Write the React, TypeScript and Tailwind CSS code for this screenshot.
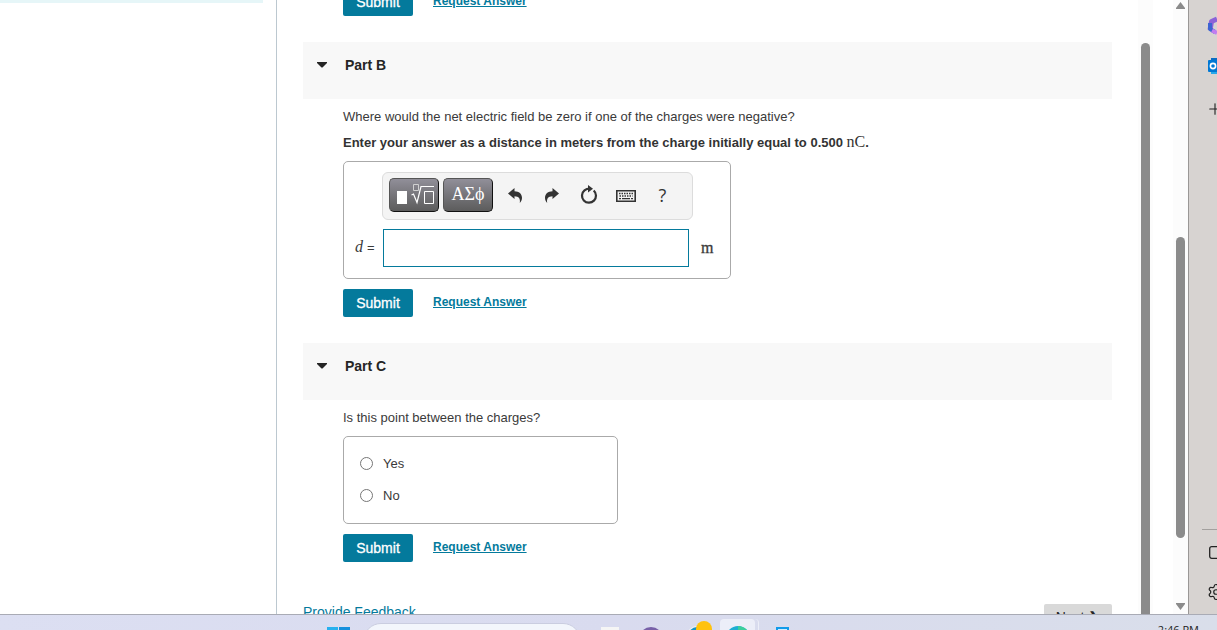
import React from "react";
import { Plus, Settings } from "lucide-react";

function SubmitRow() {
  return (
    <div className="flex items-start">
      <button
        type="button"
        className="h-7 w-[70px] rounded-xs bg-[#047a9c] text-sm font-normal text-white [-webkit-text-stroke:0.3px_white]"
      >
        Submit
      </button>
      <a
        href="#answer"
        className="ml-5 pt-[5px] text-xs font-bold text-[#047a9c] underline"
      >
        Request Answer
      </a>
    </div>
  );
}

function PartHeader({ title }: { title: string }) {
  return (
    <h2 className="mt-[26px] h-[57px] bg-[#f8f8f8]">
      <button
        type="button"
        className="flex items-center pt-3 pl-3.5 text-sm font-bold text-[#252525]"
      >
        <svg width="10" height="6" viewBox="0 0 10 6" aria-hidden="true">
          <path d="M0 0h10v1L5.500 5.600h-1L0 1z" fill="#252525" />
        </svg>
        <span className="ml-[18px] leading-[22px]">{title}</span>
      </button>
    </h2>
  );
}

function MathToolbar() {
  const darkButton =
    "flex h-[34px] w-[50px] items-center justify-center rounded-[5px] border border-[#111] border-t-[#555] border-l-[#555] bg-linear-to-b from-[#918f99] to-[#5c5c5c] text-white";
  const iconButton =
    "flex h-[34px] w-[37px] items-center justify-center text-[#333]";

  return (
    <div className="ml-[38px] flex h-12 w-[311px] items-start rounded-md border border-[#dcdcdc] bg-[#f4f4f4] pt-[5px] pl-1.5">
      <button type="button" aria-label="Templates" className={darkButton}>
        <svg width="40" height="24" viewBox="0 0 40 24" fill="none" stroke="#fff">
          <path d="M3 8h10v13H3z" fill="#fff" stroke="none" />
          <path d="M19.500 1.500h5v6h-5z" stroke="#d0d0d0" />
          <path d="M17.500 12l2-1 3.500 8.500L27 3.500h13" strokeWidth="1.200" />
          <path d="M30.500 8.500h9v12h-9z" />
        </svg>
      </button>
      <button
        type="button"
        aria-label="Symbols"
        className={`${darkButton} ml-1 pb-0.5 font-['Liberation_Serif',serif] text-lg`}
      >
        ΑΣϕ
      </button>
      <button type="button" aria-label="Undo" className={`${iconButton} ml-[3px]`}>
        <svg width="14" height="15" viewBox="0 0 14 15" fill="currentColor">
          <path d="M0 5.500L6.500 0v3.200c4.500.1 7.500 2.600 7.500 6.600 0 2-.7 3.600-2.200 5.200.7-4.300-.8-6.700-5.300-6.800V11z" />
        </svg>
      </button>
      <button type="button" aria-label="Redo" className={iconButton}>
        <svg width="14" height="15" viewBox="0 0 14 15" fill="currentColor">
          <path d="M14 5.500L7.500 0v3.200C3 3.300 0 5.800 0 9.800c0 2 .7 3.600 2.200 5.200-.7-4.300.8-6.700 5.300-6.800V11z" />
        </svg>
      </button>
      <button type="button" aria-label="Reset" className={iconButton}>
        <svg width="18" height="20" viewBox="0 0 18 20" fill="none">
          <path
            d="M13.700 5.500A7 7 0 1 1 4.500 5.300Q6.500 3.700 10 3.700"
            stroke="currentColor"
            strokeWidth="2.200"
          />
          <path d="M8 0l5 3.800L8 7.500z" fill="currentColor" />
        </svg>
      </button>
      <button type="button" aria-label="Keyboard" className={`${iconButton} pt-0.5`}>
        <svg width="20" height="16" viewBox="0 0 20 16" fill="none" stroke="currentColor">
          <path d="M.8 2.800h18.400v10.400H.8z" strokeWidth="1.600" />
          <path d="M3 5.500h14" strokeWidth="1.300" strokeDasharray="1.500 1" />
          <path d="M3.500 8h13" strokeWidth="1.300" strokeDasharray="1.500 1" />
          <path d="M3 10.700h2M6 10.700h8M15 10.700h2" strokeWidth="1.300" />
        </svg>
      </button>
      <button
        type="button"
        aria-label="Help"
        className={`${iconButton} font-['Open_Sans',sans-serif] text-lg`}
      >
        ?
      </button>
    </div>
  );
}

function Choice({ label }: { label: string }) {
  return (
    <label className="flex h-8 items-center">
      <input
        type="radio"
        name="between"
        className="size-[13px] appearance-none rounded-full border border-[#767676] bg-white checked:border-4 checked:border-[#047a9c]"
      />
      <span className="ml-2.5 pt-0.5">{label}</span>
    </label>
  );
}

function Assignment() {
  return (
    <main className="min-w-0 flex-1 overflow-hidden pr-[26px] pl-[26px] text-[13px] text-[#3a3a3a]">
      <div className="-mt-3 pl-10">
        <SubmitRow />
      </div>

      <PartHeader title="Part B" />
      <section className="pl-10">
        <p className="pt-2 leading-5">
          Where would the net electric field be zero if one of the charges were
          negative?
        </p>
        <p className="mt-[5px] leading-5 font-bold text-[#333]">
          Enter your answer as a distance in meters from the charge initially
          equal to 0.500{" "}
          <span className="font-['Liberation_Serif',serif] text-base leading-5 font-normal">
            nC
          </span>
          .
        </p>
        <div className="mt-2 h-[118px] w-[388px] rounded-[5px] border border-[#aaa] pt-2.5">
          <MathToolbar />
          <div className="mt-[9px] flex items-center font-['Liberation_Serif',serif]">
            <label htmlFor="distance" className="w-[39px] pb-0.5 pl-[11px] text-base whitespace-nowrap">
              <i>d</i> <span className="font-['Liberation_Sans',sans-serif] text-[13px]">=</span>
            </label>
            <input
              id="distance"
              type="text"
              className="h-[38px] w-[306px] border border-[#047a9c] px-2 text-base outline-none"
            />
            <span className="ml-3 text-base [-webkit-text-stroke:0.3px_#3a3a3a]">m</span>
          </div>
        </div>
        <div className="mt-2.5">
          <SubmitRow />
        </div>
      </section>

      <PartHeader title="Part C" />
      <section className="pl-10">
        <p className="pt-2 leading-5">Is this point between the charges?</p>
        <fieldset className="mt-2 h-[88px] w-[275px] rounded-[5px] border border-[#aaa] pt-2.5 pl-4">
          <Choice label="Yes" />
          <Choice label="No" />
        </fieldset>
        <div className="mt-2.5">
          <SubmitRow />
        </div>
      </section>

      <footer className="mt-[42px] flex items-start justify-between">
        <a href="#feedback" className="text-sm leading-4 text-[#047a9c]">
          Provide Feedback
        </a>
        <button
          type="button"
          className="h-[26px] w-[68px] rounded-xs bg-[#d9d9d9] text-sm text-[#252525]"
        >
          Next ❯
        </button>
      </footer>
    </main>
  );
}

function BrowserSidebar() {
  return (
    <aside className="flex w-[29px] shrink-0 flex-col overflow-hidden border-l border-[#9a9796] bg-[#d7d3d1] text-[#222]">
      <svg className="mt-4 ml-[18px] shrink-0" width="20" height="20" viewBox="0 0 20 20" fill="none">
        <path d="M10 3L4.500 5.500 3 14" stroke="#8b62d8" strokeWidth="5" strokeLinejoin="round" />
        <path d="M3 7v6l5 3" stroke="#3d63d2" strokeWidth="4" strokeLinejoin="round" />
        <path d="M5 14.500l5 2.500" stroke="#c27cf0" strokeWidth="4" />
      </svg>
      <svg className="mt-[21px] ml-[18px] shrink-0" width="20" height="18" viewBox="0 0 20 18" fill="none">
        <path d="M4 1h16v16H4z" fill="#28a8ea" />
        <path d="M4 1h16v4H4z" fill="#0a6cc4" />
        <rect x="1" y="3" width="12" height="12" rx="1" fill="#0078d4" />
        <circle cx="6" cy="9" r="2.600" stroke="#fff" strokeWidth="1.600" />
      </svg>
      <Plus className="mt-[25px] ml-[17px] shrink-0" size={18} strokeWidth={1.5} />
      <div className="mt-auto ml-[13px] border-t border-[#a3a09e] pb-4" />
      <svg className="ml-5 shrink-0" width="16" height="13" viewBox="0 0 16 13" fill="none">
        <rect x=".7" y=".7" width="15" height="11.600" rx="2" stroke="#222" strokeWidth="1.300" />
      </svg>
      <Settings className="mt-6 mb-[13px] ml-[18px] shrink-0" size={18} strokeWidth={1.6} />
    </aside>
  );
}

function Taskbar() {
  return (
    <footer className="flex h-4 shrink-0 items-start overflow-hidden border-t border-[#a9abb5] bg-linear-to-r from-[#dcdff2] via-[#d9dbef] to-[#d9deea]">
      <svg className="mt-3 ml-[327px] shrink-0" width="24" height="24" viewBox="0 0 24 24">
        <path d="M0 0h11v11H0zM0 12h11v11H0z" fill="#28b1ef" />
        <path d="M12 0h11v11H12zM12 12h11v11H12z" fill="#1690dd" />
      </svg>
      <div className="mt-2 ml-3 h-9 w-[218px] shrink-0 rounded-full border border-[#cacde0] bg-[#f3f6fc]" />
      <div className="mt-3 ml-5 h-6 w-[18px] shrink-0 bg-[#f5f5f5]" />
      <div className="mt-3 ml-5 size-6 shrink-0 rounded-full bg-[#7861a8]" />
      <svg className="mt-1.5 ml-[23px] shrink-0" width="28" height="26" viewBox="0 0 28 26">
        <circle cx="11" cy="15" r="10" fill="#f5f5f5" />
        <circle cx="11" cy="15" r="7.500" fill="none" stroke="#1593c8" strokeWidth="3" />
        <circle cx="18" cy="8" r="8" fill="#ffc20e" />
      </svg>
      <div className="mt-1 ml-1.5 flex h-9 w-[35px] shrink-0 justify-center rounded bg-[#eceef8] pt-[7px]">
        <svg width="24" height="24" viewBox="0 0 24 24">
          <circle cx="12" cy="12" r="12" fill="#1eaed3" />
          <path d="M12 0a12 12 0 0 1 12 12H12z" fill="#3ccf9b" />
        </svg>
      </div>
      <div className="mt-1 h-9 w-1 shrink-0 rounded-r border-r border-[#eceef8]" />
      <div className="mt-3 ml-[17px] h-6 w-[13px] shrink-0 border-2 border-[#129bea] bg-[#cfeeff]" />
      <time className="mt-[7px] mr-[18px] ml-auto font-['Open_Sans',sans-serif] text-[11px] leading-4 text-[#222]">
        2:46 PM
      </time>
    </footer>
  );
}

export default function App() {
  return (
    <div className="flex h-screen flex-col overflow-hidden bg-white font-['Liberation_Sans',Arial,sans-serif]">
      <div className="flex min-h-0 flex-1">
        <aside className="w-[277px] shrink-0 border-r border-[#bcc8d0]">
          <div className="mr-[13px] h-[3px] bg-[#e6f6f8]" />
        </aside>
        <Assignment />
        <div className="flex w-[15px] shrink-0 justify-center bg-[#fcfcfc] pt-[43px]">
          <div className="w-[9px] rounded-t-full bg-[#8b8b8b]" />
        </div>
        <div className="ml-5 flex w-[15px] shrink-0 flex-col items-center bg-[#fcfcfc]">
          <svg className="mt-0.5 shrink-0" width="9" height="7" viewBox="0 0 9 7">
            <path d="M4.500 0L9 6v1H0V6z" fill="#8b8b8b" />
          </svg>
          <div className="mt-[228px] h-[301px] w-[9px] shrink-0 rounded-full bg-[#8b8b8b]" />
          <svg className="mt-auto mb-1 shrink-0" width="9" height="7" viewBox="0 0 9 7">
            <path d="M4.500 7L9 1V0H0v1z" fill="#8b8b8b" />
          </svg>
        </div>
        <BrowserSidebar />
      </div>
      <Taskbar />
    </div>
  );
}
